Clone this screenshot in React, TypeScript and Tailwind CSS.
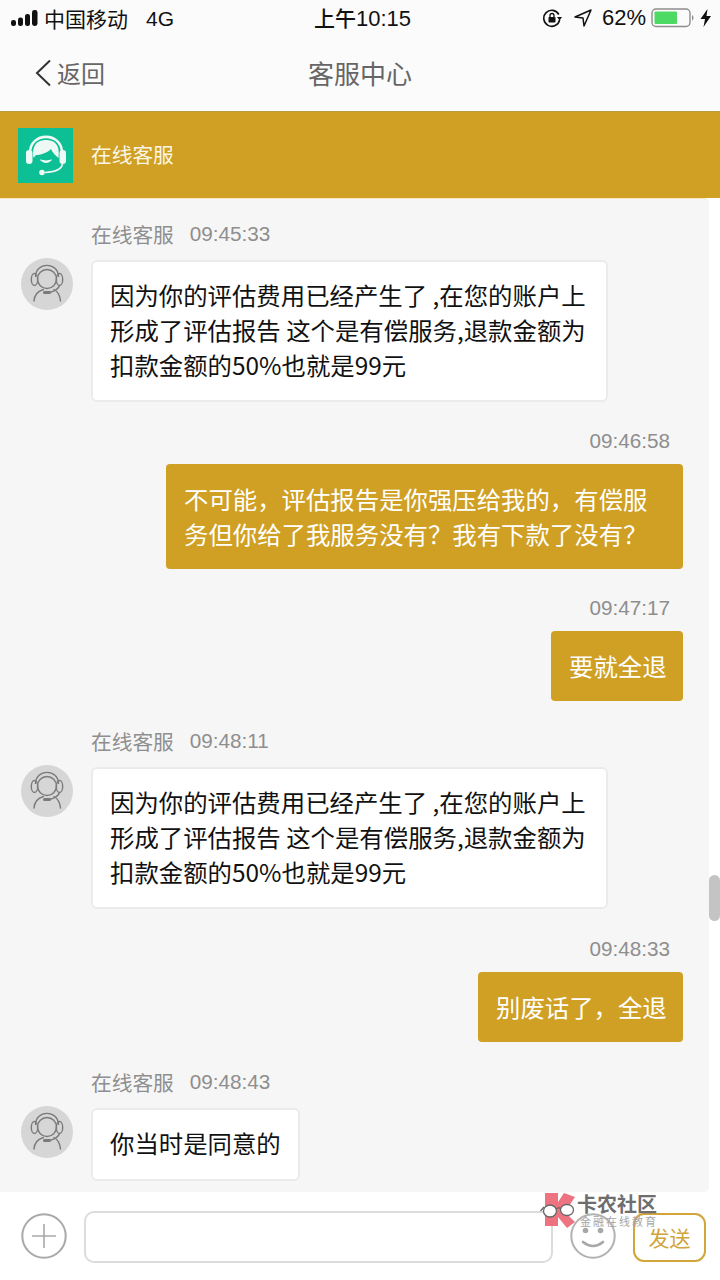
const CJK = "font-['Noto_Sans_CJK_SC','Liberation_Sans',sans-serif]";

function Signal() {
  return (
    <svg width="28" height="16" viewBox="0 0 28 16" className="block">
      <rect x="0" y="10" width="5" height="6" rx="2.2" fill="#111" />
      <rect x="7" y="7.5" width="5" height="8.5" rx="2.2" fill="#111" />
      <rect x="14" y="4" width="5" height="12" rx="2.2" fill="#111" />
      <rect x="21" y="0" width="5.5" height="16" rx="2.4" fill="#111" />
    </svg>
  );
}

function AgentIcon() {
  return (
    <svg width="52" height="52" viewBox="0 0 52 52" fill="none">
      <circle cx="26" cy="26" r="26" fill="#d6d6d6" />
      <circle cx="26" cy="21" r="9.5" stroke="#7a7a7a" strokeWidth="1.4" />
      <path d="M14.5 19 C14.5 3.5 37.5 3.5 37.5 19" stroke="#7a7a7a" strokeWidth="1.4" />
      <ellipse cx="13.5" cy="21.5" rx="3.2" ry="6" stroke="#7a7a7a" strokeWidth="1.4" />
      <ellipse cx="38.5" cy="21.5" rx="3.2" ry="6" stroke="#7a7a7a" strokeWidth="1.4" />
      <path d="M13 43 C13.5 36 17 33 22.5 31.5 M39.5 43 C39 37.5 36.5 33.5 33 31.5" stroke="#7a7a7a" strokeWidth="1.4" strokeLinecap="round" />
      <path d="M38.5 27.5 C37.5 31 33 33.5 28 34.5" stroke="#7a7a7a" strokeWidth="1.4" />
      <rect x="22" y="33" width="8" height="3" rx="1.5" fill="#7a7a7a" />
    </svg>
  );
}

function Logo() {
  return (
    <div className="w-[55px] h-[55px] bg-[#0dbf94] shrink-0 flex items-center justify-center">
      <svg width="42" height="42" viewBox="0 0 42 42" fill="none">
        <path d="M5 19 C5 -2.5 37 -2.5 37 19" stroke="#eef8f4" strokeWidth="2.6" />
        <path d="M8.5 24 C6.5 9 14 6 21 6 C28 6 35.5 9 33.5 24 C31 22 27.5 19 26 15 C22 19 15 21 11 21 C10 22 9.5 23 8.5 24 Z" fill="#eef8f4" />
        <rect x="1" y="16" width="6.5" height="14" rx="3.2" fill="#eef8f4" />
        <rect x="34.5" y="16" width="6.5" height="14" rx="3.2" fill="#eef8f4" />
        <path d="M15.5 26 Q21 31 26.5 26 Q21 28 15.5 26 Z" fill="#eef8f4" stroke="#eef8f4" strokeWidth="1" />
        <path d="M37.5 30 C36.5 35 30 38 20 38.5" stroke="#eef8f4" strokeWidth="1.6" />
        <circle cx="17" cy="38.5" r="2.8" fill="#eef8f4" />
      </svg>
    </div>
  );
}

function Time({ children, name }: { children: string; name?: boolean }) {
  return (
    <div className={`text-[20.7px] leading-[28px] text-[#8e8e8e] ${name ? "pl-[91px] flex gap-[16px]" : "text-right pr-[39px]"}`}>
      {name && <span>在线客服</span>}
      <span className="font-['Liberation_Sans',sans-serif]">{children}</span>
    </div>
  );
}

function Left({ time, lines, w, h, mt }: { time: string; lines: string[]; w: string; h: string; mt: string }) {
  return (
    <div className={mt}>
      <Time name>{time}</Time>
      <div className="flex pl-[21px] gap-[18px] mt-[12px]">
        <div className="shrink-0 mt-[-2px]"><AgentIcon /></div>
        <div className={`${w} ${h} bg-white border-2 border-[#ebebeb] rounded-[6px] text-[24.4px] leading-[35px] text-[#111] pl-[17px] pb-[4px] flex flex-col justify-center`}>
          {lines.map((l) => <div key={l} className="whitespace-pre">{l}</div>)}
        </div>
      </div>
    </div>
  );
}

function Right({ time, lines, w, h, mt }: { time: string; lines: string[]; w: string; h: string; mt: string }) {
  return (
    <div className={mt}>
      <Time>{time}</Time>
      <div className="flex justify-end pr-[26px] mt-[9px]">
        <div className={`${w} ${h} bg-[#cfa024] rounded-[4px] text-[24.4px] leading-[35px] text-white pl-[18px] pb-[2px] flex flex-col justify-center`}>
          {lines.map((l) => <div key={l} className="whitespace-pre">{l}</div>)}
        </div>
      </div>
    </div>
  );
}

const body = [
  "因为你的评估费用已经产生了 ,在您的账户上",
  "形成了评估报告 这个是有偿服务,退款金额为",
  "扣款金额的50%也就是99元",
];

export default function App() {
  return (
    <div className={`w-[720px] h-[1280px] overflow-hidden flex flex-col bg-white relative ${CJK}`}>
      <div className="bg-[#fbfbfb] h-[111px] shrink-0 flex flex-col">
        <div className="h-[36px] flex items-center justify-between pl-[11px] pr-[8px] text-[#111]">
          <div className="flex items-center w-[270px]">
            <Signal />
            <span className="text-[21px] ml-[5px] leading-none">中国移动</span>
            <span className="text-[21px] ml-[18px] leading-none font-['Liberation_Sans',sans-serif]">4G</span>
          </div>
          <div className="text-[21px] leading-none flex items-baseline font-medium ml-[2px]">
            <span>上午</span><span className="font-['Liberation_Sans',sans-serif] text-[22px]">10:15</span>
          </div>
          <div className="flex items-center w-[270px] justify-end">
            <svg width="20" height="20" viewBox="0 0 20 20" fill="none">
              <path d="M16.8 6.5 A8 8 0 1 0 17.6 12" stroke="#111" strokeWidth="1.6" />
              <path d="M15 9 L20 9 L17.6 12.5 Z" fill="#111" />
              <rect x="6.5" y="9" width="7" height="5.5" rx="0.8" fill="#111" />
              <path d="M8 9 V7.5 a2 2 0 0 1 4 0 V9" stroke="#111" strokeWidth="1.3" />
            </svg>
            <svg width="18" height="18" viewBox="0 0 18 18" fill="none" className="ml-[12px]">
              <path d="M1 8 L17 1 L10 17 L9 9 Z" stroke="#111" strokeWidth="1.5" strokeLinejoin="round" />
            </svg>
            <span className="ml-[10px] text-[22px] leading-none font-['Liberation_Sans',sans-serif]">62%</span>
            <svg width="44" height="20" viewBox="0 0 44 20" fill="none" className="ml-[5px]">
              <rect x="1" y="1" width="38" height="17.5" rx="4" stroke="#8d8d8d" strokeWidth="1.4" />
              <rect x="3.5" y="3.5" width="22.5" height="12.5" rx="1" fill="#4cd964" />
              <path d="M41 7 C43 8 43 11.5 41 12.5 Z" fill="#8d8d8d" />
            </svg>
            <svg width="12" height="18" viewBox="0 0 12 18" className="ml-[5px]">
              <path d="M7.5 0 L0.5 10 L5 10 L3.5 18 L11 7 L6.5 7 Z" fill="#111" />
            </svg>
          </div>
        </div>
        <div className="relative flex-1 flex items-center justify-center pb-[1px]">
          <div className="absolute left-[35px] top-[20px] flex items-center text-[#666]">
            <svg width="16" height="28" viewBox="0 0 16 28" fill="none">
              <path d="M15 1.5 L2 14 L15 26.5" stroke="#333" strokeWidth="2" />
            </svg>
            <span className="ml-[6px] text-[24px] leading-[34px]">返回</span>
          </div>
          <span className="text-[26px] leading-[34px] text-[#666]">客服中心</span>
        </div>
      </div>

      <div className="h-[87px] shrink-0 bg-[#cfa024] border-t border-[#bb9a42] flex items-center pl-[18px]">
        <Logo />
        <span className="ml-[18px] text-[20.7px] text-[#fbf6e6]">在线客服</span>
      </div>

      <div className="h-[994px] shrink-0 relative bg-white overflow-hidden">
        <div className="w-[709px] h-full bg-[#f6f6f6] border-t border-[#f6e9c2] rounded-r-[5px] flex flex-col pt-[21px] gap-[24px]">
          <Left mt="mt-0" time="09:45:33" lines={body} w="w-[517px]" h="h-[142px]" />
          <Right mt="mt-[-1px]" time="09:46:58" lines={["不可能，评估报告是你强压给我的，有偿服", "务但你给了我服务没有？我有下款了没有？"]} w="w-[517px]" h="h-[105px]" />
          <Right mt="mt-[-1px]" time="09:47:17" lines={["要就全退"]} w="w-[132px]" h="h-[70px]" />
          <Left mt="mt-[2px]" time="09:48:11" lines={body} w="w-[517px]" h="h-[142px]" />
          <Right mt="mt-0" time="09:48:33" lines={["别废话了，全退"]} w="w-[205px]" h="h-[70px]" />
          <Left mt="mt-[2px]" time="09:48:43" lines={["你当时是同意的"]} w="w-[209px]" h="h-[73px]" />
        </div>
        <div className="absolute left-[709px] top-[677px] w-[11px] h-[46px] rounded-full bg-[#c4c4c4]" />
      </div>

      <div className="flex-1 bg-white flex items-start pt-[18px] relative">
        <svg width="46" height="46" viewBox="0 0 46 46" fill="none" className="ml-[21px] mt-[3px] shrink-0">
          <circle cx="23" cy="23" r="21.7" stroke="#a9a9a9" strokeWidth="2" />
          <path d="M23 11 V35 M11 23 H35" stroke="#a9a9a9" strokeWidth="1.6" />
        </svg>
        <div className="ml-[17px] w-[469px] h-[52px] mt-[1px] rounded-[10px] border-2 border-[#dcdcdc] bg-white shrink-0" />
        <svg width="46" height="46" viewBox="0 0 46 46" fill="none" className="ml-[17px] mt-[3px] shrink-0">
          <circle cx="23" cy="23" r="21.7" stroke="#b2b2b2" strokeWidth="2" />
          <circle cx="15.5" cy="17.5" r="2.8" fill="#a8a8a8" />
          <circle cx="30.5" cy="17.5" r="2.8" fill="#a8a8a8" />
          <path d="M13 29 Q23 37 33 29" stroke="#a8a8a8" strokeWidth="2.6" strokeLinecap="round" />
        </svg>
        <div className="ml-[17px] w-[73px] h-[49px] mt-[3px] rounded-[11px] border-2 border-[#d2a63a] text-[#cfa53c] text-[21px] flex items-center justify-center shrink-0">发送</div>

        <div className="absolute left-[540px] top-[0px] w-[120px] h-[38px] pointer-events-none">
          <svg width="40" height="38" viewBox="0 0 40 38" className="absolute left-0 top-0">
            <path d="M5 1 H18 V10 L24 1 L35 5 L25 20 L35 30 L27 36 L18 25 V34 H5 Z" fill="#ec6473" fillOpacity="0.9" />
            <ellipse cx="10" cy="19" rx="6.5" ry="6" fill="#fff" stroke="#666" strokeWidth="1.3" />
            <ellipse cx="27" cy="18" rx="6.5" ry="5.5" fill="#fff" stroke="#666" strokeWidth="1.3" />
            <path d="M0.5 19 L4 15 M16 17 Q18.5 15 21 16.5" stroke="#666" strokeWidth="1.3" fill="none" />
          </svg>
          <div className="absolute left-[37px] top-[1px] text-[20px] leading-[22px] font-bold text-[#6e6e6e] whitespace-nowrap">卡农社区</div>
          <div className="absolute left-[40px] top-[22px] text-[11px] leading-[14px] text-[#a5a5a5] tracking-[2px] whitespace-nowrap">金融在线教育</div>
        </div>
      </div>
    </div>
  );
}
